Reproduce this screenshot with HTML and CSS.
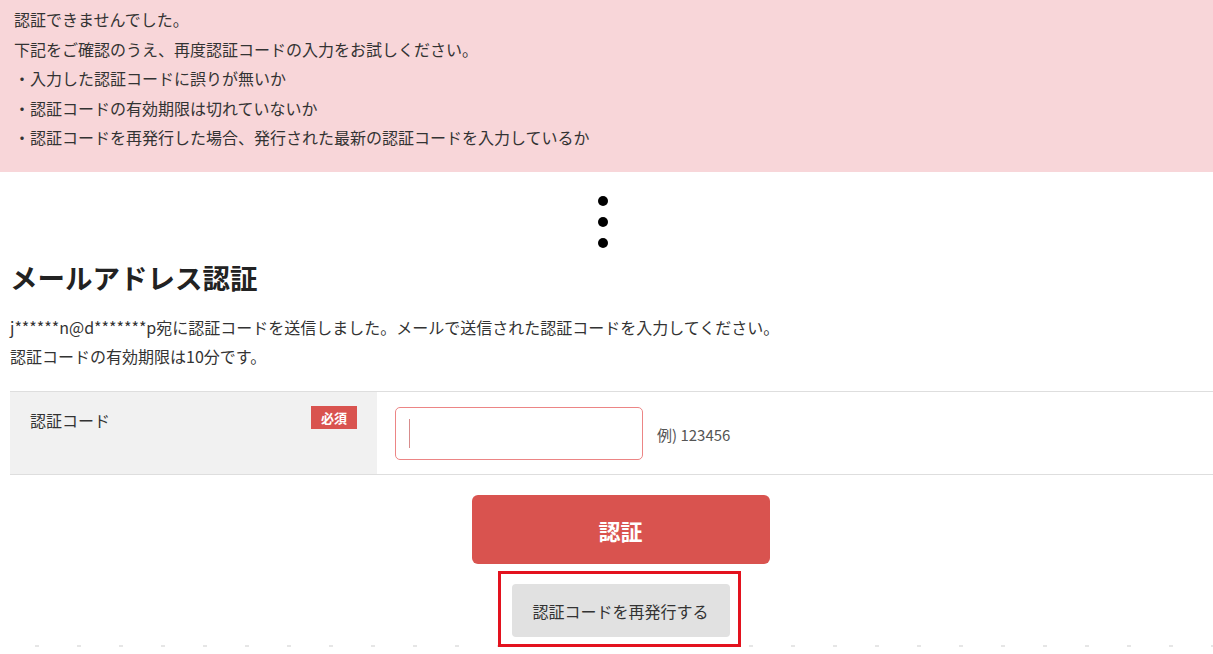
FILE: index.html
```html
<!DOCTYPE html>
<html lang="ja">
<head>
<meta charset="utf-8">
<title>メールアドレス認証</title>
<link rel="stylesheet" href="styles.css">
</head>
<body>
<div class="alert">
  <p>認証できませんでした。</p>
  <p>下記をご確認のうえ、再度認証コードの入力をお試しください。</p>
  <p>・入力した認証コードに誤りが無いか</p>
  <p>・認証コードの有効期限は切れていないか</p>
  <p>・認証コードを再発行した場合、発行された最新の認証コードを入力しているか</p>
</div>
<div class="ellipsis"><span class="dot"></span><span class="dot"></span><span class="dot"></span></div>
<main class="content">
  <h1 class="title">メールアドレス認証</h1>
  <p class="lead">j******n@d*******p宛に認証コードを送信しました。メールで送信された認証コードを入力してください。<br>認証コードの有効期限は10分です。</p>
  <div class="form-row">
    <div class="label-cell">
      <span class="label">認証コード</span>
      <span class="badge">必須</span>
    </div>
    <div class="field-cell">
      <div class="input"><span class="caret"></span></div>
      <span class="example">例) 123456</span>
    </div>
  </div>
  <div class="actions">
    <button class="btn-primary" type="button">認証</button>
    <div class="highlight">
      <button class="btn-secondary" type="button">認証コードを再発行する</button>
    </div>
  </div>
  <div class="dots-line"></div>
</main>
</body>
</html>
```

FILE: styles.css
```css
html, body {
  margin: 0;
  padding: 0;
  background: #fff;
  overflow: hidden;
}
body {
  font-family: "Noto Sans CJK JP", "Noto Sans", sans-serif;
  color: #333;
  font-size: 16px;
}
.alert {
  background: #f8d6d9;
  padding: 5px 14px 20px;
  height: 147px;
}
.alert p {
  margin: 0;
  line-height: 29.5px;
  font-size: 16px;
  color: #333;
}
.ellipsis {
  display: flex;
  flex-direction: column;
  align-items: center;
  gap: 11px;
  padding: 24px 7px 0 0;
}
.dot {
  width: 10px;
  height: 10px;
  border-radius: 50%;
  background: #000;
}
.content {
  padding-left: 10px;
}
.title {
  margin: 9px 0 0;
  font-size: 27.5px;
  line-height: 40px;
  font-weight: 700;
  color: #222;
}
.lead {
  margin: 16px 0 0;
  line-height: 29px;
  font-size: 16px;
  color: #333;
}
.form-row {
  margin-top: 20px;
  display: flex;
  border-top: 1px solid #dedede;
  border-bottom: 1px solid #dedede;
  height: 82px;
  margin-right: -20px;
}
.label-cell {
  width: 367px;
  background: #f1f1f1;
  display: flex;
  justify-content: space-between;
  align-items: flex-start;
  padding: 15px 20px 0 20px;
  box-sizing: border-box;
}
.label {
  font-size: 16px;
  line-height: 26px;
  color: #333;
}
.badge {
  margin-top: -1px;
  width: 46px;
  height: 23px;
  background: #d9534f;
  color: #fff;
  font-size: 13px;
  font-weight: 700;
  line-height: 23px;
  text-align: center;
}
.field-cell {
  flex: 1;
  display: flex;
  align-items: center;
  padding-left: 18px;
  padding-top: 14px;
  padding-bottom: 14px;
  gap: 14px;
}
.input {
  width: 248px;
  height: 53px;
  box-sizing: border-box;
  border: 1px solid #ec8585;
  border-radius: 5px;
  background: #fff;
  display: flex;
  align-items: center;
  padding-left: 13px;
}
.caret {
  width: 1px;
  height: 29px;
  background: #d78c8c;
}
.example {
  font-size: 15px;
  color: #555;
  padding-top: 3px;
}
.actions {
  display: flex;
  flex-direction: column;
  align-items: center;
  padding-left: 18px;
  margin-top: 20px;
}
.btn-primary {
  width: 298px;
  height: 69px;
  border: none;
  border-radius: 6px;
  background: #d9534f;
  color: #fff;
  font-family: inherit;
  font-size: 22px;
  font-weight: 700;
}
.highlight {
  margin-top: 7px;
  border: 3px solid #e3121e;
  padding: 10px 8px 7px 11px;
  margin-left: -3px;
}
.btn-secondary {
  display: block;
  width: 218px;
  height: 53px;
  border: none;
  border-radius: 4px;
  background: #e1e1e1;
  color: #333;
  font-family: inherit;
  font-size: 16px;
}
.dots-line {
  height: 2px;
  margin-top: -2px;
  margin-left: -10px;
  background-image: repeating-linear-gradient(to right, transparent 0, transparent 35px, #e6e6e6 35px, #e6e6e6 39px, transparent 39px, transparent 42px);
}
```
